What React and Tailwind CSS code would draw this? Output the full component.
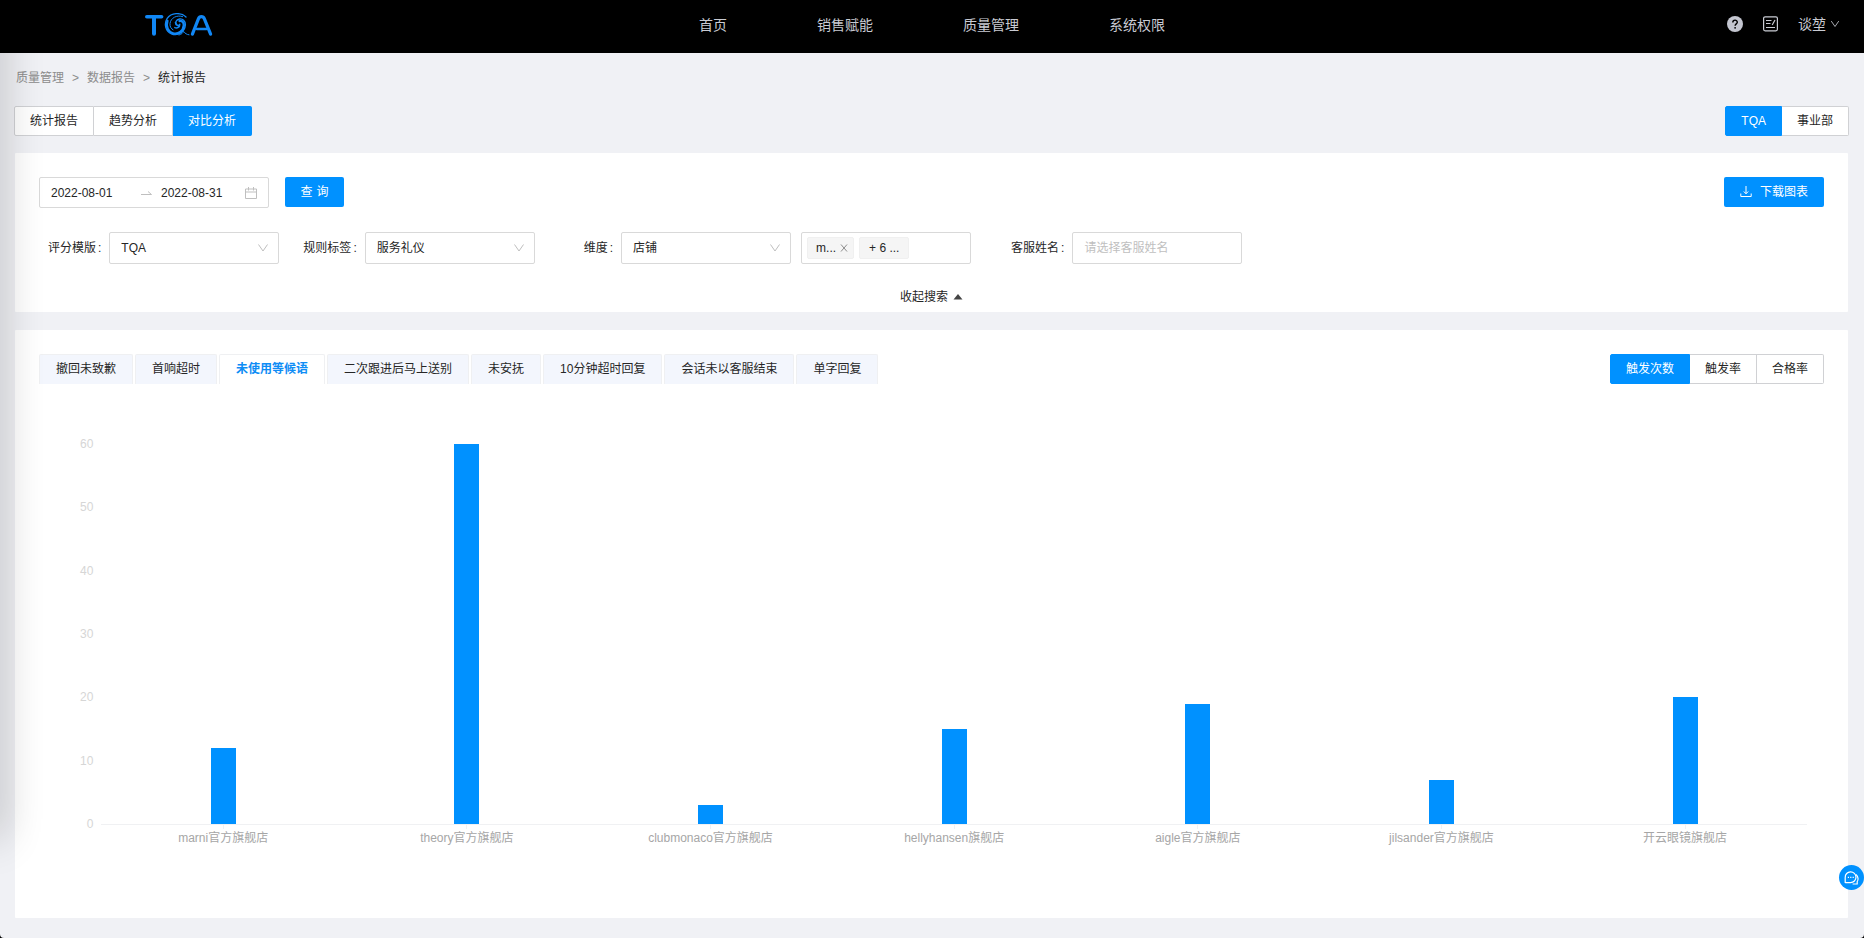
import { useState } from 'react';
import clsx from 'clsx';

const NAV_ITEMS = ['首页', '销售赋能', '质量管理', '系统权限'];

const RULE_TABS = [
    '撤回未致歉',
    '首响超时',
    '未使用等候语',
    '二次跟进后马上送别',
    '未安抚',
    '10分钟超时回复',
    '会话未以客服结束',
    '单字回复',
];

const CHART_DATA = [
    { name: 'marni官方旗舰店', value: 12 },
    { name: 'theory官方旗舰店', value: 60 },
    { name: 'clubmonaco官方旗舰店', value: 3 },
    { name: 'hellyhansen旗舰店', value: 15 },
    { name: 'aigle官方旗舰店', value: 19 },
    { name: 'jilsander官方旗舰店', value: 7 },
    { name: '开云眼镜旗舰店', value: 20 },
];

const Y_TICKS = [60, 50, 40, 30, 20, 10, 0];
const Y_MAX = 60;

function Logo() {
    return (
        <svg width="68" height="24" viewBox="0 0 68 24" fill="none" stroke="#1187f5" strokeLinecap="round" strokeLinejoin="round" aria-label="TQA">
            <path d="M1.8 3.8H16.6" strokeWidth="3.6" />
            <path d="M9 4V20.8" strokeWidth="4" />
            {/* swirl */}
            <path d="M41 4C36 -1 26 -.4 22.2 5.4C18.6 11 20.6 18.4 26.4 20.8C33 23.4 39.8 19 40.4 12C40.6 8 37.6 5.4 34.4 6C31 6.6 30 9.6 31.8 11.4" strokeWidth="1.3" />
            <path d="M22.4 8C20.6 13.6 23 19 28 20.4C33.4 21.8 38.4 18 38.8 12.4C39 9.4 37 7.4 34.6 8" strokeWidth="2.4" />
            <path d="M37.6 3.6C31.6 1.6 25.6 5 25 10.6C24.8 13.6 26 15.8 28 16.8" strokeWidth="1" />
            <path d="M30.4 9.4C30.4 12.4 33.8 13.4 34.8 11.2C35 14.4 32 15.6 29.8 14.6" strokeWidth="1.4" />
            <path d="M34 22C36.4 21.4 38 20 38.6 18.4C40 20.4 41.8 21.6 44 21.8" strokeWidth="1" />
            <path d="M47.4 21.2L53.4 5.8C54.6 2.8 58.2 2.8 59.4 5.8L65.6 21.2" strokeWidth="3.2" />
            <path d="M52 16H61.4" strokeWidth="2.6" />
        </svg>
    );
}

function ChevronDown({ className }) {
    return (
        <svg className={className} width="12" height="12" viewBox="0 0 12 12" fill="none" stroke="currentColor">
            <path d="M1.5 2.5L6 9L10.5 2.5" />
        </svg>
    );
}

function Header() {
    return (
        <header className="flex h-[53px] items-center bg-black pb-1 text-sm text-[#c9cbd3]">
            <div className="flex-1">
                <div className="ml-[145px]">
                    <Logo />
                </div>
            </div>
            <nav className="flex gap-[90px]">
                {NAV_ITEMS.map(item => (
                    <a key={item} href="#">{item}</a>
                ))}
            </nav>
            <div className="flex-1">
                <div className="mr-6 flex items-center justify-end gap-5 pb-[2px]">
                    <button type="button" aria-label="帮助">
                        <svg width="16" height="16" viewBox="0 0 16 16">
                            <circle cx="8" cy="8" r="8" fill="#c4c6d0" />
                            <path d="M5.8 6.4C5.8 3.4 10.3 3.5 10.3 6.2C10.3 7.8 8.1 7.9 8.1 9.7" fill="none" stroke="#000" strokeWidth="1.4" />
                            <circle cx="8.1" cy="11.8" r=".9" fill="#000" />
                        </svg>
                    </button>
                    <button type="button" aria-label="记录">
                        <svg width="15" height="16" viewBox="0 0 15 16" fill="none" stroke="currentColor">
                            <rect x=".6" y=".8" width="13.8" height="14" rx="1.5" strokeWidth="1.2" />
                            <path d="M3 4.5H8.5M3 7.5H7.5M3 11.5H12M12 4L9.2 9" strokeWidth="1.2" />
                        </svg>
                    </button>
                    <button type="button" className="flex items-center gap-1">
                        谈堃
                        <ChevronDown className="h-[10px] w-[10px]" />
                    </button>
                </div>
            </div>
        </header>
    );
}

function Segmented({ options, value, onChange }) {
    return (
        <div className="flex">
            {options.map((option, i) => (
                <button
                    key={option}
                    type="button"
                    onClick={() => onChange(option)}
                    className={clsx(
                        'h-[30px] border-y border-r px-[15px]',
                        i === 0 && 'rounded-l-xs border-l',
                        i === options.length - 1 && 'rounded-r-xs',
                        option === value
                            ? 'border-[#0091ff] bg-[#0091ff] text-white'
                            : 'border-[#d0d1d4] bg-white'
                    )}
                >
                    {option}
                </button>
            ))}
        </div>
    );
}

function SelectField({ id, options }) {
    return (
        <div className="relative">
            <select id={id} className="h-8 w-[170px] appearance-none rounded-xs border border-[#d9d9d9] bg-white px-[11px] outline-none">
                {options.map(option => (
                    <option key={option}>{option}</option>
                ))}
            </select>
            <ChevronDown className="pointer-events-none absolute top-[10px] right-[10px] text-[#bfbfbf]" />
        </div>
    );
}

function FieldLabel({ htmlFor, children }) {
    return (
        <label htmlFor={htmlFor} className="mr-2 flex gap-[2px]">
            {children}
            <span>:</span>
        </label>
    );
}

function FilterCard() {
    return (
        <section className="rounded-[1px] bg-white px-6 pt-6 pb-[6px]">
            <div className="flex items-start justify-between">
                <div className="flex items-start gap-4">
                    <div className="flex h-[31px] w-[230px] items-center rounded-xs border border-[#d9d9d9] px-[11px]">
                        <input aria-label="开始日期" defaultValue="2022-08-01" className="w-[90px] outline-none" />
                        <svg className="mr-[9px] shrink-0" width="11" height="12" viewBox="0 0 11 12" fill="none" stroke="#bfbfbf">
                            <path d="M0 7.5H10.5L7 4.5" />
                        </svg>
                        <input aria-label="结束日期" defaultValue="2022-08-31" className="w-[84px] outline-none" />
                        <svg className="shrink-0" width="12" height="12" viewBox="0 0 12 12" fill="none" stroke="#bfbfbf">
                            <path d="M.5 2H11.5V11.5H.5ZM.5 5H11.5M3.5 0V3.5M8.5 0V3.5" />
                        </svg>
                    </div>
                    <button type="button" className="flex h-[30px] w-[59px] items-center justify-center gap-1 rounded-xs bg-[#0091ff] text-white">
                        <span>查</span>
                        <span>询</span>
                    </button>
                </div>
                <button type="button" className="flex h-[30px] items-center gap-2 rounded-xs bg-[#0091ff] px-4 text-white">
                    <svg width="12" height="12" viewBox="0 0 12 12" fill="none" stroke="currentColor">
                        <path d="M6 0V7.5M3.8 5.5L6 7.8L8.2 5.5M.8 7.5V10.5H11.2V7.5" />
                    </svg>
                    下载图表
                </button>
            </div>

            <div className="mt-6 flex items-center pl-[9px]">
                <FieldLabel htmlFor="template">评分模版</FieldLabel>
                <SelectField id="template" options={['TQA']} />
                <div className="ml-6 flex items-center">
                    <FieldLabel htmlFor="rule">规则标签</FieldLabel>
                    <SelectField id="rule" options={['服务礼仪']} />
                </div>
                <div className="ml-[49px] flex items-center">
                    <FieldLabel htmlFor="dimension">维度</FieldLabel>
                    <SelectField id="dimension" options={['店铺']} />
                    <div className="ml-[10px] flex h-8 w-[170px] items-center gap-[5px] rounded-xs border border-[#d9d9d9] px-[5px]">
                        <span className="flex h-[22px] items-center gap-1 rounded-xs border border-[#f0f0f0] bg-[#f5f5f5] pr-[5px] pl-2">
                            m...
                            <button type="button" aria-label="移除" className="text-[#8c8c8c]">
                                <svg width="8" height="8" viewBox="0 0 8 8" fill="none" stroke="currentColor">
                                    <path d="M1 .5L7 7.5M7 .5L1 7.5" />
                                </svg>
                            </button>
                        </span>
                        <span className="flex h-[22px] items-center rounded-xs border border-[#f0f0f0] bg-[#f5f5f5] px-[9px]">+ 6 ...</span>
                    </div>
                </div>
                <div className="ml-10 flex items-center">
                    <FieldLabel htmlFor="agent">客服姓名</FieldLabel>
                    <input
                        id="agent"
                        placeholder="请选择客服姓名"
                        className="h-8 w-[170px] rounded-xs border border-[#d9d9d9] px-[11px] outline-none placeholder:text-[#bfbfbf]"
                    />
                </div>
            </div>

            <div className="mt-6 flex justify-center">
                <button type="button" className="flex items-center gap-[5px]">
                    收起搜索
                    <svg width="10" height="6" viewBox="0 0 10 6" fill="#444">
                        <path d="M5 0L9.5 5.5H.5Z" />
                    </svg>
                </button>
            </div>
        </section>
    );
}

function BarChart() {
    return (
        <div className="flex pr-[17px] pl-[41px]">
            <div className="mr-2 -mt-[9px] flex h-[398px] flex-col justify-between text-right text-[#d6d6d6]">
                {Y_TICKS.map(tick => (
                    <span key={tick}>{tick}</span>
                ))}
            </div>
            <div className="flex-1">
                <div className="flex h-[381px] border-b border-[#f0f1f3]">
                    {CHART_DATA.map(item => (
                        <div key={item.name} className="flex flex-1 items-end justify-center">
                            <div className="w-[25px] bg-[#0091ff]" style={{ height: `${(item.value / Y_MAX) * 100}%` }} />
                        </div>
                    ))}
                </div>
                <div className="flex text-[#a6a6a6]">
                    {CHART_DATA.map(item => (
                        <div key={item.name} className="flex flex-1 flex-col items-center">
                            <div className="h-1 w-px bg-[#f0f1f3]" />
                            {item.name}
                        </div>
                    ))}
                </div>
            </div>
        </div>
    );
}

function ReportCard() {
    const [activeRule, setActiveRule] = useState('未使用等候语');
    const [metric, setMetric] = useState('触发次数');

    return (
        <section className="mt-[18px] rounded-[1px] bg-white px-6 pt-6 pb-[71px]">
            <div className="mb-[60px] flex items-center justify-between">
                <div className="flex gap-[2px]" role="tablist">
                    {RULE_TABS.map(tab => (
                        <button
                            key={tab}
                            type="button"
                            role="tab"
                            aria-selected={tab === activeRule}
                            onClick={() => setActiveRule(tab)}
                            className={clsx(
                                'h-[30px] rounded-t-xs border border-b-0 border-[#eff0f2] px-4 pb-px',
                                tab === activeRule ? 'bg-white font-bold text-[#0f8df5]' : 'bg-[#f3f6fd]'
                            )}
                        >
                            {tab}
                        </button>
                    ))}
                </div>
                <Segmented options={['触发次数', '触发率', '合格率']} value={metric} onChange={setMetric} />
            </div>
            <BarChart />
        </section>
    );
}

export default function App() {
    const [view, setView] = useState('对比分析');
    const [scope, setScope] = useState('TQA');

    return (
        <div className="min-h-screen bg-black font-['Liberation_Sans','Noto_Sans_CJK_SC',sans-serif] text-xs leading-[18px] text-[#262626]">
            <div className="relative min-h-screen overflow-hidden rounded-b-sm bg-[#f0f1f5]">
                <Header />

                <main className="pr-[15px] pb-5 pl-[14px]">
                    <div className="flex gap-2 pt-4 pl-[2px] text-[#8c8c8c]">
                        <a href="#">质量管理</a>
                        <span>&gt;</span>
                        <a href="#">数据报告</a>
                        <span>&gt;</span>
                        <span className="text-[#262626]">统计报告</span>
                    </div>

                    <div className="mt-[19px] mb-[17px] flex justify-between">
                        <Segmented options={['统计报告', '趋势分析', '对比分析']} value={view} onChange={setView} />
                        <Segmented options={['TQA', '事业部']} value={scope} onChange={setScope} />
                    </div>

                    <div className="px-px">
                        <FilterCard />
                        <ReportCard />
                    </div>
                </main>

                {/* shadow of the collapsed side drawer */}
                <div className="pointer-events-none absolute top-[53px] bottom-0 left-0 w-12 overflow-hidden">
                    <div className="absolute -top-10 bottom-[100px] -left-5 w-5 shadow-[0_0_40px_rgba(0,0,0,0.3)]" />
                </div>

                <button
                    type="button"
                    aria-label="在线咨询"
                    className="absolute right-0 bottom-12 flex h-[25px] w-[25px] items-center justify-center rounded-full bg-[#0091ff]"
                >
                    <svg width="15" height="14" viewBox="0 0 15 14" fill="none" stroke="#fff" strokeWidth="1.2">
                        <path d="M1.2 12V6.4A5.4 5.4 0 1 1 6.6 11.6H1.2" />
                        <path d="M12 3.5C14.6 5.6 14.4 9.4 13.2 10.6V13H8.6" />
                        <path d="M3.8 6.4H5M6.2 6.4H7.4M8.6 6.4H9.8" />
                    </svg>
                </button>
            </div>
        </div>
    );
}
